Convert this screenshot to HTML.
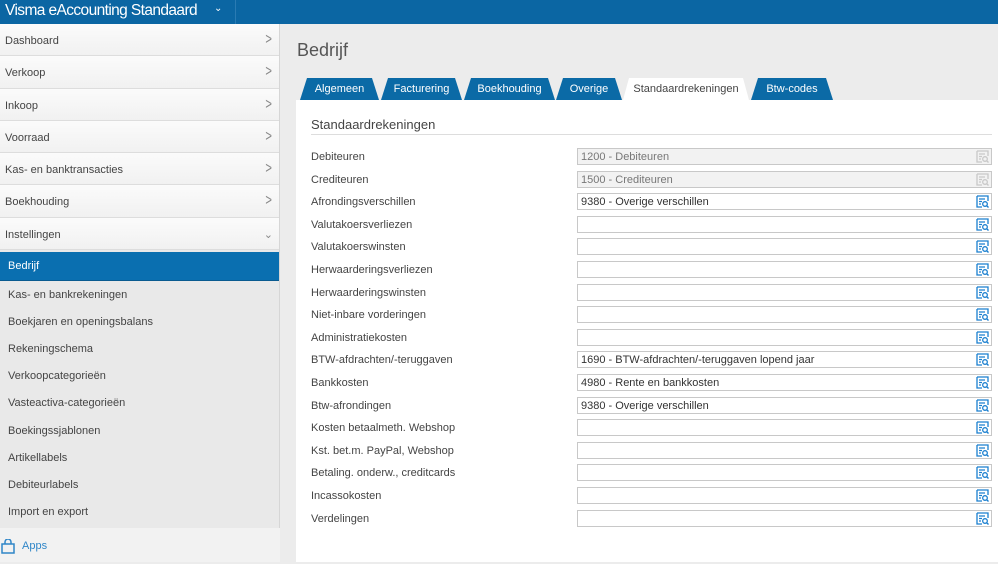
<!DOCTYPE html>
<html><head><style>
*{margin:0;padding:0;box-sizing:border-box}
body{width:998px;height:562px;overflow:hidden;background:#ececec;font-family:"Liberation Sans",sans-serif;font-size:11px;color:#333;position:relative}
.top{position:absolute;left:0;top:0;width:998px;height:24px;background:#0b66a3}
.top .t{position:absolute;left:5px;top:2px;color:#fff;font-size:15.5px;letter-spacing:-0.6px}
.top .c{position:absolute;left:214px;top:3px;color:#fff;font-size:10px}
.top .d{position:absolute;left:235px;top:0;width:1px;height:24px;background:#2a7bb3}
.side{position:absolute;left:0;top:24px;width:280px;height:538px;background:#e9e9e9;border-right:1px solid #d6d6d6}
.m{height:32.3px;background:linear-gradient(#fbfbfb,#f1f1f1);border-bottom:1px solid #ddd;padding:0 5px;line-height:34px;position:relative;color:#444}
.m .ar{position:absolute;right:6px;top:-1px;color:#888;font-size:16px;transform:scaleX(.7)}
.sel{margin-top:2px;height:29px;background:#0a6fb0;color:#fff;line-height:28px;padding-left:8px;border-bottom:1px solid #0a5b90}
.s{height:27.1px;line-height:29px;padding-left:8px;color:#444}
.apps{position:absolute;left:0;top:504px;width:280px;height:34px;background:#f2f2f2;color:#2f86c8;line-height:36px;padding-left:22px}
h1{position:absolute;left:297px;top:40px;font-weight:normal;font-size:18px;color:#555}
.tab{position:absolute;top:78px;height:22px;color:#fff;font-size:11px;text-align:center;line-height:23px}
.tab:before{content:"";position:absolute;inset:0;background:#0b6aa6;clip-path:polygon(7px 0,calc(100% - 7px) 0,100% 100%,0 100%);border-radius:3px 3px 0 0;z-index:-1}
.tab.a{color:#444}
.tab.a:before{background:#fff;clip-path:polygon(6px 0,calc(100% - 6px) 0,100% 100%,0 100%)}
.panel{position:absolute;left:296px;top:100px;width:702px;height:462px;background:#fff}
.sec{position:absolute;left:311px;top:117px;font-size:13px;color:#444}
.hr{position:absolute;left:311px;top:134px;width:681px;height:1px;background:#ddd}
.row{position:absolute;left:311px;width:681px;height:17px}
.row .l{position:absolute;left:0;top:3px;color:#444}
.row .i{position:absolute;left:266px;top:0;width:415px;height:17px;border:1px solid #c8c8c8;background:#fff;padding-left:3px;line-height:16px;color:#333}
.row .i.g{background:#f2f2f2;color:#777}
.ic{position:absolute;right:2px;top:1px}
</style></head><body>
<div class="top"><span class="t">Visma eAccounting Standaard</span><span class="c">&#8964;</span><div class="d"></div></div>
<div class="side">
<div class="m">Dashboard<span class="ar">&gt;</span></div>
<div class="m">Verkoop<span class="ar">&gt;</span></div>
<div class="m">Inkoop<span class="ar">&gt;</span></div>
<div class="m">Voorraad<span class="ar">&gt;</span></div>
<div class="m">Kas- en banktransacties<span class="ar">&gt;</span></div>
<div class="m">Boekhouding<span class="ar">&gt;</span></div>
<div class="m">Instellingen<span class="ar" style="font-size:11px;transform:none;top:0">&#8964;</span></div>
<div class="sel">Bedrijf</div>
<div class="s">Kas- en bankrekeningen</div>
<div class="s">Boekjaren en openingsbalans</div>
<div class="s">Rekeningschema</div>
<div class="s">Verkoopcategorieën</div>
<div class="s">Vasteactiva-categorieën</div>
<div class="s">Boekingssjablonen</div>
<div class="s">Artikellabels</div>
<div class="s">Debiteurlabels</div>
<div class="s">Import en export</div>
<div class="apps"><svg style="position:absolute;left:1px;top:11px" width="14" height="15" viewBox="0 0 14 15"><path d="M1 5h12v9H1z M4 5V3a3 3 0 0 1 6 0v2" fill="none" stroke="#2f86c8" stroke-width="1.5"/></svg>Apps</div>
</div>
<h1>Bedrijf</h1>
<div class="panel"></div>
<div class="tab" style="left:300px;width:79px">Algemeen</div>
<div class="tab" style="left:381px;width:81px">Facturering</div>
<div class="tab" style="left:464px;width:91px">Boekhouding</div>
<div class="tab" style="left:556px;width:66px">Overige</div>
<div class="tab a" style="left:623px;width:126px">Standaardrekeningen</div>
<div class="tab" style="left:751px;width:82px">Btw-codes</div>
<div class="sec">Standaardrekeningen</div><div class="hr"></div>
<svg width="0" height="0" style="position:absolute"><defs><symbol id="q" viewBox="0 0 13 13"><path d="M1 1h11v5M1 1v11h5M3 4h6M3 6.5h3M3 9h2" fill="none" stroke="currentColor" stroke-width="1.3"/><circle cx="9" cy="9" r="2.3" fill="none" stroke="currentColor" stroke-width="1.3"/><path d="M10.6 10.6L12.5 12.5" stroke="currentColor" stroke-width="1.4"/></symbol></defs></svg>
<div class="row" style="top:148px"><span class="l">Debiteuren</span><div class="i g">1200 - Debiteuren<svg class="ic" width="13" height="13" style="color:#c8c8c8"><use href="#q"/></svg></div></div>
<div class="row" style="top:171px"><span class="l">Crediteuren</span><div class="i g">1500 - Crediteuren<svg class="ic" width="13" height="13" style="color:#c8c8c8"><use href="#q"/></svg></div></div>
<div class="row" style="top:193px"><span class="l">Afrondingsverschillen</span><div class="i">9380 - Overige verschillen<svg class="ic" width="13" height="13" style="color:#1a7fcf"><use href="#q"/></svg></div></div>
<div class="row" style="top:216px"><span class="l">Valutakoersverliezen</span><div class="i"><svg class="ic" width="13" height="13" style="color:#1a7fcf"><use href="#q"/></svg></div></div>
<div class="row" style="top:238px"><span class="l">Valutakoerswinsten</span><div class="i"><svg class="ic" width="13" height="13" style="color:#1a7fcf"><use href="#q"/></svg></div></div>
<div class="row" style="top:261px"><span class="l">Herwaarderingsverliezen</span><div class="i"><svg class="ic" width="13" height="13" style="color:#1a7fcf"><use href="#q"/></svg></div></div>
<div class="row" style="top:284px"><span class="l">Herwaarderingswinsten</span><div class="i"><svg class="ic" width="13" height="13" style="color:#1a7fcf"><use href="#q"/></svg></div></div>
<div class="row" style="top:306px"><span class="l">Niet-inbare vorderingen</span><div class="i"><svg class="ic" width="13" height="13" style="color:#1a7fcf"><use href="#q"/></svg></div></div>
<div class="row" style="top:329px"><span class="l">Administratiekosten</span><div class="i"><svg class="ic" width="13" height="13" style="color:#1a7fcf"><use href="#q"/></svg></div></div>
<div class="row" style="top:351px"><span class="l">BTW-afdrachten/-teruggaven</span><div class="i">1690 - BTW-afdrachten/-teruggaven lopend jaar<svg class="ic" width="13" height="13" style="color:#1a7fcf"><use href="#q"/></svg></div></div>
<div class="row" style="top:374px"><span class="l">Bankkosten</span><div class="i">4980 - Rente en bankkosten<svg class="ic" width="13" height="13" style="color:#1a7fcf"><use href="#q"/></svg></div></div>
<div class="row" style="top:397px"><span class="l">Btw-afrondingen</span><div class="i">9380 - Overige verschillen<svg class="ic" width="13" height="13" style="color:#1a7fcf"><use href="#q"/></svg></div></div>
<div class="row" style="top:419px"><span class="l">Kosten betaalmeth. Webshop</span><div class="i"><svg class="ic" width="13" height="13" style="color:#1a7fcf"><use href="#q"/></svg></div></div>
<div class="row" style="top:442px"><span class="l">Kst. bet.m. PayPal, Webshop</span><div class="i"><svg class="ic" width="13" height="13" style="color:#1a7fcf"><use href="#q"/></svg></div></div>
<div class="row" style="top:464px"><span class="l">Betaling. onderw., creditcards</span><div class="i"><svg class="ic" width="13" height="13" style="color:#1a7fcf"><use href="#q"/></svg></div></div>
<div class="row" style="top:487px"><span class="l">Incassokosten</span><div class="i"><svg class="ic" width="13" height="13" style="color:#1a7fcf"><use href="#q"/></svg></div></div>
<div class="row" style="top:510px"><span class="l">Verdelingen</span><div class="i"><svg class="ic" width="13" height="13" style="color:#1a7fcf"><use href="#q"/></svg></div></div>
</body></html>
